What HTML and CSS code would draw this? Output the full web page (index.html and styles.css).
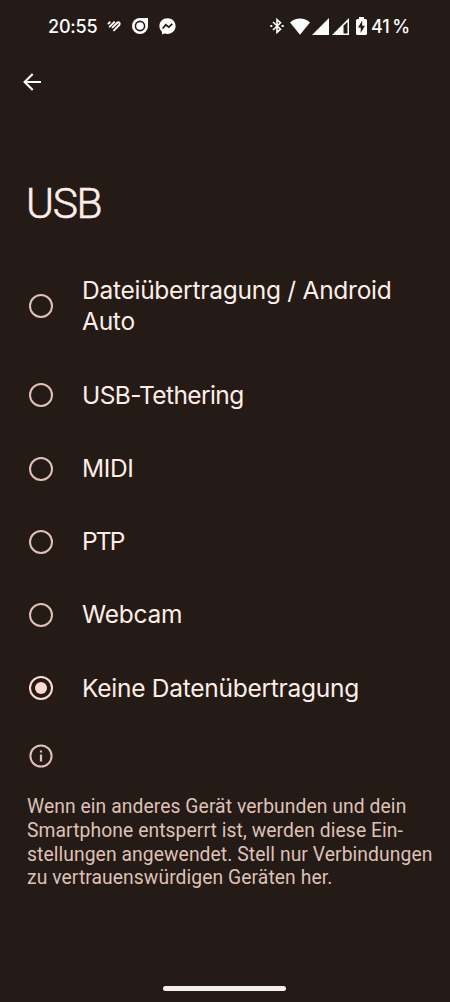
FILE: index.html
```html
<!DOCTYPE html>
<html lang="de">

    <head>
        <meta charset="UTF-8">
        <title>USB</title>
        <link rel="stylesheet" href="styles.css">
    </head>

    <body>
        <header class="status">
            <span class="clock">20:55</span>
            <svg class="fit" width="14" height="16" viewBox="0 0 14 16" fill="none" stroke="#fff" stroke-width="1.9" stroke-linecap="round">
                <path d="M1.4 5.6 2.8 4.3M2.7 8.6 7.2 4.1M5.6 9.4 10 5C11.6 3.4 13.7 5.4 12.2 7L7 12.4"/>
            </svg>
            <svg class="ring" width="16" height="16" viewBox="0 0 16 16">
                <path d="M8 0H16V8A8 8 0 1 1 8 0Z" fill="#fff"/>
                <circle cx="8" cy="8" r="4.6" fill="#fff" stroke="#241a16" stroke-width="1.6"/>
            </svg>
            <svg class="messenger" width="17" height="17" viewBox="0 0 17 17">
                <path d="M8.5.3C3.8.3.4 3.7.4 8.1c0 2.3 1 4.3 2.6 5.7v2.8l2.6-1.1c.9.3 1.9.4 2.9.4 4.7 0 8.1-3.4 8.1-7.8S13.2.3 8.5.3Z" fill="#fff"/>
                <path d="M3.7 10.5 6.8 6.7 9.8 9.1 13.3 5.9" fill="none" stroke="#241a16" stroke-width="1.8"/>
            </svg>
            <span class="spacer"></span>
            <svg class="bluetooth" width="14" height="16" viewBox="0 0 14 16" fill="none" stroke="#fff" stroke-width="1.6">
                <path d="M3 4 L10.5 11.2 L7 14.4 V1.6 L10.5 4.8 L3 12"/>
                <path d="M.3 8H2.3M11.7 8H13.7" stroke-width="2"/>
            </svg>
            <svg class="wifi" width="20" height="17" viewBox="0 0 20 17">
                <path d="M0 4.5C5.5-.8 14.5-.8 20 4.5L10 16.7Z" fill="#fff"/>
            </svg>
            <svg class="signal" width="17" height="17" viewBox="0 0 17 17">
                <path d="M0 17 17 0V17Z" fill="#fff"/>
            </svg>
            <svg class="signal last" width="17" height="17" viewBox="0 0 17 17">
                <path d="M0 17 17 0V17Z" fill="#fff"/>
                <path d="M11.5 7.7 15.5 3.7V15.5H11.5Z" fill="#241a16"/>
            </svg>
            <svg class="battery" width="11" height="18" viewBox="0 0 11 18">
                <path d="M3 0H8V2H9.5Q11 2 11 3.5V16.5Q11 18 9.5 18H1.5Q0 18 0 16.5V3.5Q0 2 1.5 2H3Z" fill="#fff"/>
                <path d="M6.2 3.5 2 10.4H4.7V16L9 8.7H6.2Z" fill="#241a16"/>
            </svg>
            <span class="percent">41&#8201;%</span>
        </header>

        <nav class="toolbar">
            <svg width="18" height="18" viewBox="0 0 18 18" fill="none" stroke="#fff" stroke-width="2.1">
                <path d="M18 9H1.8M9.7.9 1.6 9 9.7 17.1"/>
            </svg>
        </nav>

        <h1>USB</h1>

        <ul class="options">
            <li><span class="radio"></span><span class="label wide">Dateiübertragung / Android<br>Auto</span></li>
            <li><span class="radio"></span><span class="label tight">USB-Tethering</span></li>
            <li><span class="radio"></span><span class="label">MIDI</span></li>
            <li><span class="radio"></span><span class="label tighter">PTP</span></li>
            <li><span class="radio"></span><span class="label wide">Webcam</span></li>
            <li><span class="radio checked"></span><span class="label wide">Keine Datenübertragung</span></li>
        </ul>

        <section class="info">
            <svg width="24" height="24" viewBox="0 0 24 24">
                <circle cx="12" cy="12" r="10.6" fill="none" stroke="#dfc1b7" stroke-width="2"/>
                <path d="M10.9 6.4H13.1V8.6H10.9ZM10.9 10.6H13.1V17.4H10.9Z" fill="#dfc1b7"/>
            </svg>
            <p>Wenn ein anderes Gerät verbunden und dein<br>Smartphone entsperrt ist, werden diese Ein-<br>stellungen angewendet. Stell nur Verbindungen<br>zu vertrauenswürdigen Geräten her.</p>
        </section>

        <footer>
            <div class="handle"></div>
        </footer>
    </body>
</html>
```
FILE: styles.css
```css
* {
    box-sizing: border-box;
}

body {
    display: flex;
    flex-direction: column;
    height: 1002px;
    margin: 0;
    background-color: #241a16;
    color: #ffede7;
    font-family: Inter, Roboto, sans-serif;
}

svg {
    display: block;
    flex: none;
}

.status {
    display: flex;
    align-items: center;
    height: 52px;
    padding: 0 40px 0 48px;
    color: #fff;
    font-size: 18px;
    font-weight: 500;
}

.clock {
    width: 50px;
    letter-spacing: -0.2px;
    white-space: nowrap;
}

.fit {
    margin-left: 9px;
}

.ring {
    margin-left: 11px;
}

.messenger {
    margin-left: 11px;
}

.spacer {
    flex: 1;
}

.wifi {
    margin-left: 6px;
}

.signal {
    margin-left: 2px;
}

.last {
    margin-left: 3px;
}

.battery {
    margin-left: 7px;
}

.percent {
    width: 39px;
    margin-left: 4px;
    letter-spacing: -0.2px;
    white-space: nowrap;
}

.toolbar {
    height: 116px;
    padding: 21px 23px;
}

h1 {
    margin: 0;
    padding-left: 26px;
    height: 86px;
    font-family: Roboto, sans-serif;
    font-size: 42.5px;
    font-weight: 300;
    line-height: 72px;
    letter-spacing: -1.3px;
    -webkit-text-stroke: 0.6px #ffede7;
}

.options {
    margin: 0;
    padding: 0;
    list-style: none;
}

.options li {
    display: flex;
    align-items: center;
    padding: 21px 0 21px 29px;
}

.radio {
    display: flex;
    align-items: center;
    justify-content: center;
    width: 24px;
    height: 24px;
    border: 2px solid #dfc1b7;
    border-radius: 50%;
}

.checked {
    border-color: #ffdbcf;
}

.checked::after {
    content: "";
    width: 12px;
    height: 12px;
    border-radius: 50%;
    background-color: #ffdbcf;
}

.label {
    margin-left: 29px;
    font-size: 24.5px;
    line-height: 31.3px;
    letter-spacing: -0.4px;
}

.wide {
    letter-spacing: -0.26px;
}

.tight {
    letter-spacing: -0.6px;
}

.tighter {
    letter-spacing: -1.8px;
}

.info {
    padding: 19px 0 0 27px;
    color: #dfc1b7;
}

.info svg {
    margin-left: 2px;
}

.info p {
    margin: 27px 0 0;
    font-family: Roboto, sans-serif;
    font-size: 19.3px;
    line-height: 23.8px;
    letter-spacing: 0.08px;
    white-space: nowrap;
}

footer {
    display: flex;
    justify-content: center;
    margin-top: auto;
    padding: 0 1px 11px 0;
}

.handle {
    width: 123px;
    height: 5px;
    border-radius: 3px;
    background-color: #f2efec;
}
```
